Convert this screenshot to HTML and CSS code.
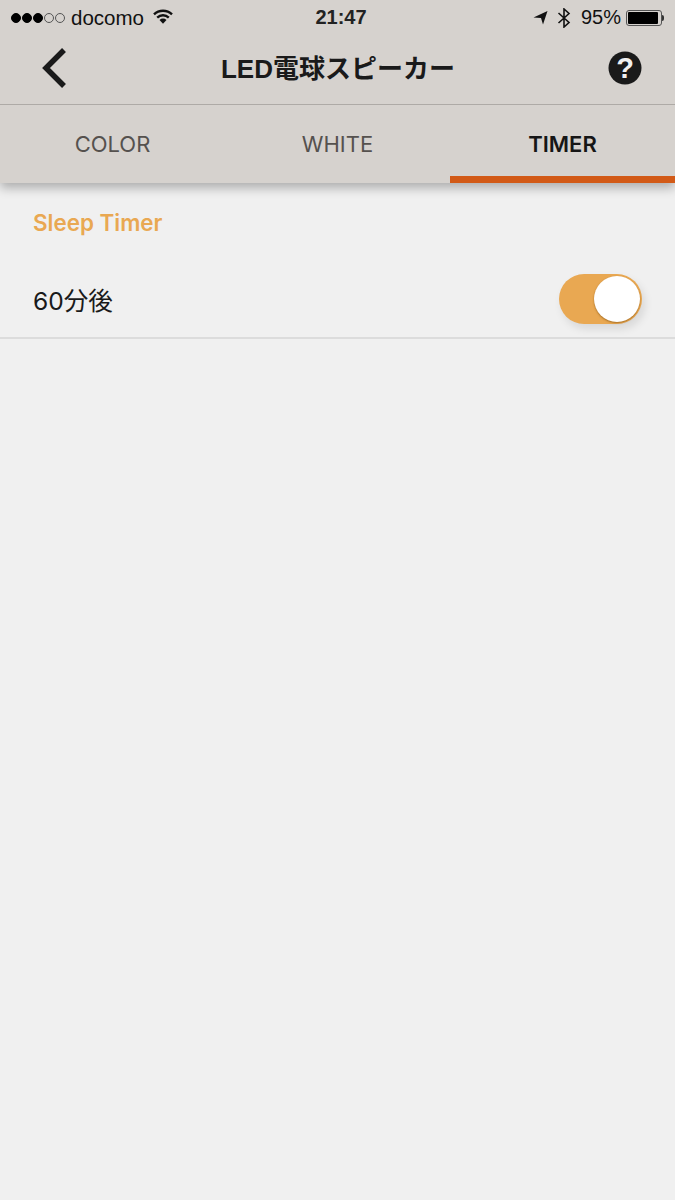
FILE: index.html
```html
<!DOCTYPE html>
<html lang="ja">
<head>
    <meta charset="UTF-8">
    <meta name="viewport" content="width=device-width, initial-scale=1.0">
    <title>LED電球スピーカー</title>
    <link rel="stylesheet" href="styles.css">
</head>
<body>
    <div class="app">
        <header class="top">
            <div class="status-bar">
                <div class="status-left">
                    <span class="signal">
                        <i class="dot on"></i><i class="dot on"></i><i class="dot on"></i><i class="dot"></i><i class="dot"></i>
                    </span>
                    <span class="carrier">docomo</span>
                    <svg class="wifi" width="20" height="15" viewBox="0 0 20 15">
                        <path d="M1 5.4 A13 13 0 0 1 19 5.4" fill="none" stroke="#111" stroke-width="2.4"/>
                        <path d="M4.2 8.6 A8.5 8.5 0 0 1 15.8 8.6" fill="none" stroke="#111" stroke-width="2.4"/>
                        <path d="M6.5 11 L10 14.8 L13.5 11 A5 5 0 0 0 6.5 11 Z" fill="#111"/>
                    </svg>
                </div>
                <div class="status-time">21:47</div>
                <div class="status-right">
                    <svg class="arrow" width="15" height="15" viewBox="0 0 15 15">
                        <path d="M0.5 7.5 L14.5 1 L10 14.5 L8 8 Z" fill="#111"/>
                    </svg>
                    <svg class="bluetooth" width="14" height="20" viewBox="0 0 14 20">
                        <path d="M1.5 5 L12 14.5 L7 19 L7 1 L12 5.5 L1.5 15" fill="none" stroke="#111" stroke-width="1.6"/>
                    </svg>
                    <span class="battery-text">95%</span>
                    <span class="battery">
                        <span class="battery-body"><span class="battery-fill"></span></span>
                        <span class="battery-tip"></span>
                    </span>
                </div>
            </div>
            <div class="nav-bar">
                <svg class="back" width="28" height="44" viewBox="0 0 28 44">
                    <path d="M24 4 L6 22 L24 40" fill="none" stroke="#1a1a1a" stroke-width="5.5"/>
                </svg>
                <h1 class="nav-title">LED電球スピーカー</h1>
                <svg class="help" width="34" height="34" viewBox="0 0 34 34">
                    <circle cx="17" cy="17" r="16.5" fill="#1a1a1a"/>
                    <text x="17" y="27" text-anchor="middle" class="help-mark">?</text>
                </svg>
            </div>
            <nav class="tabs">
                <div class="tab">COLOR</div>
                <div class="tab">WHITE</div>
                <div class="tab active">TIMER</div>
            </nav>
        </header>

        <section class="section">
            <h2 class="section-title">Sleep Timer</h2>
            <div class="row">
                <span class="row-label">60分後</span>
                <div class="toggle"><div class="knob"></div></div>
            </div>
        </section>
    </div>
</body>
</html>
```

FILE: styles.css
```css
* {
    box-sizing: border-box;
}

html, body {
    margin: 0;
    padding: 0;
}

body {
    font-family: "Liberation Sans", "Noto Sans CJK JP", sans-serif;
    background-color: #f0f0f0;
    color: #1a1a1a;
}

.app {
    min-height: 1200px;
    background-color: #f0f0f0;
}

.top {
    background-color: #d6d2ce;
    box-shadow: 0 5px 10px rgba(0, 0, 0, 0.28);
}

/* status bar */
.status-bar {
    display: grid;
    grid-template-columns: 1fr auto 1fr;
    align-items: center;
    height: 35px;
    padding: 0 11px;
    color: #111;
}

.status-left, .status-right {
    display: flex;
    align-items: center;
}

.status-right {
    justify-content: flex-end;
}

.signal {
    display: flex;
    gap: 1px;
    margin-right: 6px;
}

.dot {
    display: block;
    width: 10px;
    height: 10px;
    border: 1px solid #555;
    border-radius: 50%;
}

.dot.on {
    background-color: #000;
    border-color: #000;
}

.carrier {
    font-size: 20.5px;
}

.wifi {
    margin-left: 9px;
    margin-top: -3px;
}

.status-time {
    padding-left: 7px;
    font-size: 20px;
    font-weight: bold;
    color: #222;
}

.arrow {
    margin-right: 9px;
}

.bluetooth {
    margin-right: 10px;
}

.battery-text {
    font-size: 20px;
    margin-right: 5px;
}

.battery {
    display: flex;
    align-items: center;
}

.battery-body {
    display: block;
    width: 36px;
    height: 16px;
    padding: 1px;
    border: 1px solid #555;
    border-radius: 3px;
}

.battery-fill {
    display: block;
    width: 95%;
    height: 100%;
    background-color: #000;
    border-radius: 1px;
}

.battery-tip {
    display: block;
    width: 2px;
    height: 6px;
    background-color: #333;
    border-radius: 0 2px 2px 0;
}

/* nav bar */
.nav-bar {
    display: flex;
    align-items: center;
    justify-content: space-between;
    height: 70px;
    padding: 0 33px 4px 40px;
    border-bottom: 1px solid #aeaaa6;
}

.nav-title {
    margin: 0 0 3px;
    font-size: 26px;
    font-weight: bold;
    color: #1a1a1a;
}

.help-mark {
    font-family: "Liberation Sans", sans-serif;
    font-size: 29px;
    font-weight: bold;
    fill: #f0f0f0;
}

/* tabs */
.tabs {
    display: flex;
    height: 78px;
}

.tab {
    flex: 1;
    display: flex;
    align-items: center;
    justify-content: center;
    padding-bottom: 1px;
    font-family: Inter, "Liberation Sans", sans-serif;
    font-size: 22px;
    color: #55514e;
}

.tab.active {
    color: #161616;
    font-weight: 600;
    border-bottom: 7px solid #d25a17;
    padding-top: 7px;
}

/* timer list */
.section-title {
    margin: 0;
    padding: 26px 33px 0;
    font-family: Inter, "Liberation Sans", sans-serif;
    font-size: 22.4px;
    line-height: 27px;
    font-weight: 600;
    color: #e9a852;
}

.row {
    display: flex;
    align-items: center;
    justify-content: space-between;
    height: 103px;
    padding: 25px 33px 0;
    border-bottom: 2px solid #dcdcdc;
}

.row-label {
    font-family: Inter, "Noto Sans CJK JP", sans-serif;
    font-size: 24.6px;
    color: #1a1a1a;
}

.toggle {
    display: flex;
    justify-content: flex-end;
    align-items: center;
    width: 83px;
    height: 50px;
    padding-right: 2px;
    background-color: #e9a852;
    border-radius: 25px;
    box-shadow: 3px 5px 8px rgba(0, 0, 0, 0.1);
}

.knob {
    width: 46px;
    height: 46px;
    background-color: #fff;
    border-radius: 50%;
    box-shadow: 0 1px 2px rgba(120, 70, 0, 0.6);
}
```
